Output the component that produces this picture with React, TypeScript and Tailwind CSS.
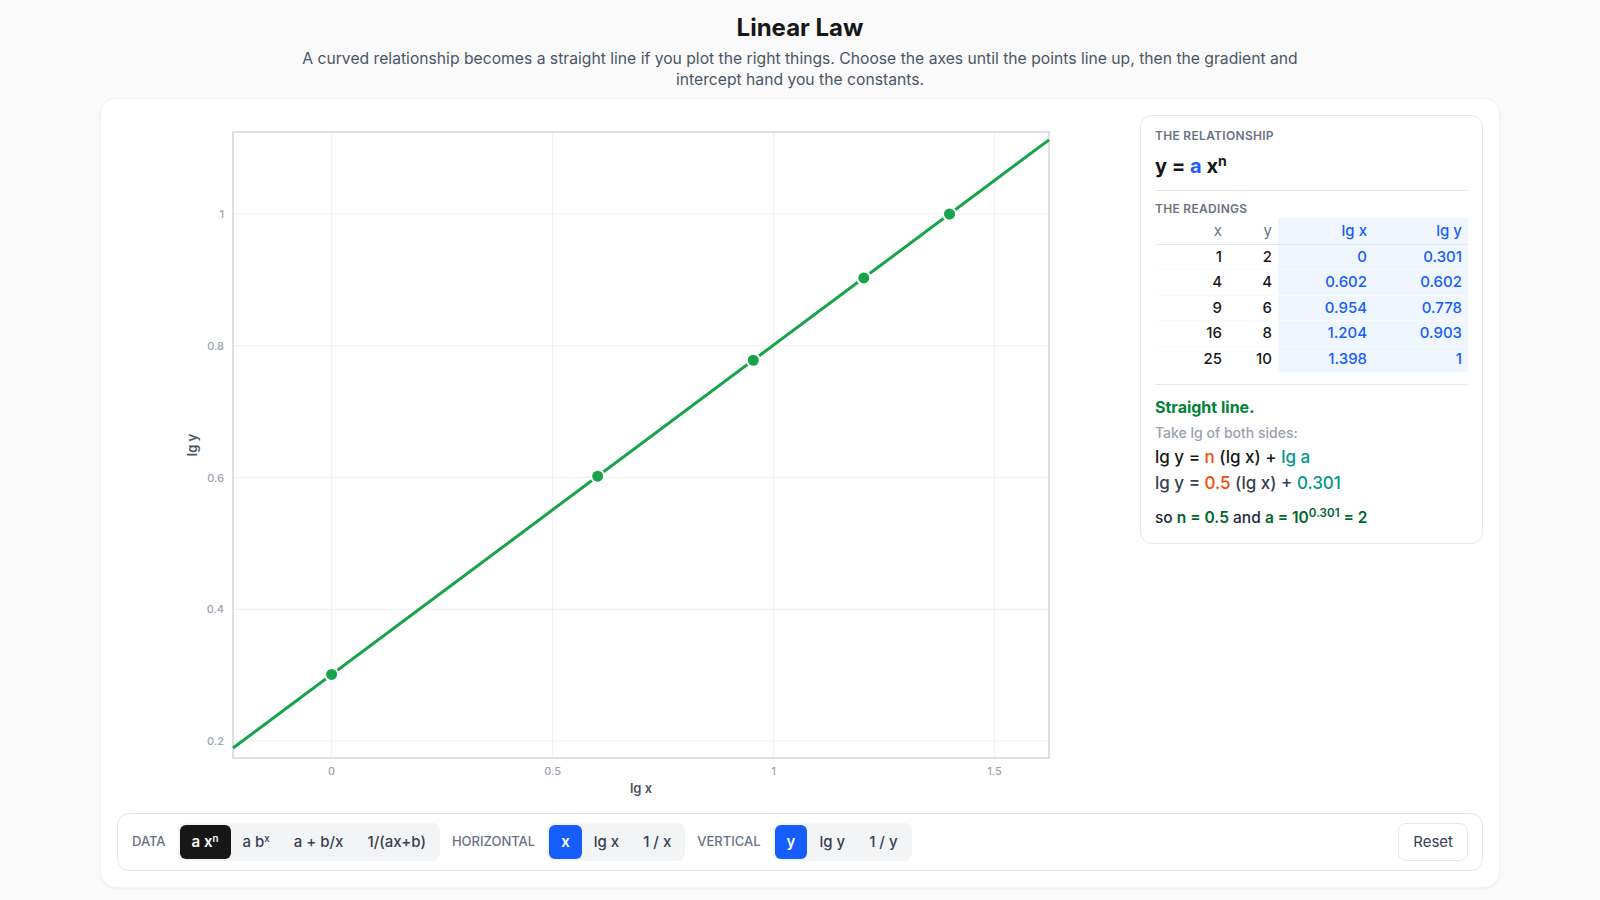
import React, { useState } from "react";

const readings = [
  { x: "1", y: "2", lx: "0", ly: "0.301" },
  { x: "4", y: "4", lx: "0.602", ly: "0.602" },
  { x: "9", y: "6", lx: "0.954", ly: "0.778" },
  { x: "16", y: "8", lx: "1.204", ly: "0.903" },
  { x: "25", y: "10", lx: "1.398", ly: "1" }
];

// plot geometry in svg pixels
const W = 1007;
const H = 682;
const L = 116;
const R = 932;
const T = 17;
const B = 643;
const px = (v: number) => 214.6 + 442 * v;
const py = (v: number) => 99 + (1 - v) * 658.75;
const invx = (p: number) => (p - 214.6) / 442;

function Chart() {
  const xTicks = [0, 0.5, 1, 1.5];
  const yTicks = [0.2, 0.4, 0.6, 0.8, 1];
  const line = (v: number) => 0.5 * v + 0.301;
  const x0 = invx(L);
  const x1 = invx(R);
  return (
    <svg width={W} height={H} viewBox={`0 0 ${W} ${H}`} className="block">
      {xTicks.map(t => (
        <line key={"gx" + t} x1={px(t)} x2={px(t)} y1={T} y2={B} stroke="#f0f1f4" strokeWidth={1} />
      ))}
      {yTicks.map(t => (
        <line key={"gy" + t} x1={L} x2={R} y1={py(t)} y2={py(t)} stroke="#f0f1f4" strokeWidth={1} />
      ))}
      <rect x={L} y={T} width={R - L} height={B - T} fill="none" stroke="#d4d6dc" strokeWidth={1.5} />
      {xTicks.map(t => (
        <text key={"tx" + t} x={px(t)} y={660} textAnchor="middle" fontSize={11} fontWeight={500} fill="#9ca3af">
          {t}
        </text>
      ))}
      {yTicks.map(t => (
        <text key={"ty" + t} x={107} y={py(t) + 4} textAnchor="end" fontSize={11} fontWeight={500} fill="#9ca3af">
          {t}
        </text>
      ))}
      <text x={(L + R) / 2} y={678} textAnchor="middle" fontSize={13} fontWeight={600} fill="#4b5563">
        lg x
      </text>
      <text
        x={80}
        y={(T + B) / 2}
        textAnchor="middle"
        fontSize={13}
        fontWeight={600}
        fill="#4b5563"
        transform={`rotate(-90 80 ${(T + B) / 2})`}
      >
        lg y
      </text>
      <line x1={L} y1={py(line(x0))} x2={R} y2={py(line(x1))} stroke="#16a34a" strokeWidth={3} />
      {readings.map(r => (
        <circle
          key={r.x}
          cx={px(Number(r.lx))}
          cy={py(Number(r.ly))}
          r={6.5}
          fill="#16a34a"
          stroke="#ffffff"
          strokeWidth={2}
        />
      ))}
    </svg>
  );
}

function Segment({
  options,
  value,
  onChange,
  activeClass
}: {
  options: { key: string; label: React.ReactNode }[];
  value: string;
  onChange: (k: string) => void;
  activeClass: string;
}) {
  return (
    <div className="flex h-[38px] items-stretch rounded-lg bg-gray-100 p-0.5">
      {options.map(o => (
        <button
          key={o.key}
          onClick={() => onChange(o.key)}
          className={
            "rounded-md px-3 text-[15px] font-medium " +
            (value === o.key ? activeClass : "text-gray-700")
          }
        >
          {o.label}
        </button>
      ))}
    </div>
  );
}

export default function App() {
  const [data, setData] = useState("axn");
  const [hor, setHor] = useState("x");
  const [ver, setVer] = useState("y");

  return (
    <div className="min-h-screen bg-[#fafafa] pt-3 font-['Inter','Noto_Sans',sans-serif] text-[#171717]">
      <h1 className="text-center text-2xl font-bold leading-8">Linear Law</h1>
      <p className="mx-auto mt-1 text-center text-[15.7px] leading-[21px] text-gray-600">
        A curved relationship becomes a straight line if you plot the right things. Choose the axes until the points line up, then the gradient and
        <br />
        intercept hand you the constants.
      </p>

      <div className="mx-auto mt-2 w-[1400px] rounded-2xl border border-[#f3f3f3] bg-white p-4 shadow-[0_1px_3px_rgba(0,0,0,0.05)]">
        <div className="flex gap-4">
          <div className="flex-1">
            <Chart />
          </div>

          <div className="h-fit w-[343px] rounded-xl border border-gray-200 px-3.5 pb-3.5 pt-3">
            <div className="text-xs font-semibold uppercase leading-4 tracking-wide text-gray-500">The relationship</div>
            <div className="mt-2 text-xl font-bold leading-7">
              y = <span className="text-blue-600">a</span> x<sup className="text-[0.7em]">n</sup>
            </div>
            <div className="mt-2.5 border-t border-gray-200 pt-2.5">
              <div className="text-xs font-semibold uppercase leading-4 tracking-wide text-gray-500">The readings</div>
              <table className="mt-px w-full border-collapse text-[15px]">
                <thead>
                  <tr className="h-[26px] border-b border-gray-200">
                    <th className="w-[73px] pr-1.5 text-right font-normal text-gray-500">x</th>
                    <th className="w-[50px] pr-1.5 text-right font-normal text-gray-500">y</th>
                    <th className="bg-blue-50 pr-1.5 text-right font-medium text-blue-600">lg x</th>
                    <th className="bg-blue-50 pr-1.5 text-right font-medium text-blue-600">lg y</th>
                  </tr>
                </thead>
                <tbody>
                  {readings.map(r => (
                    <tr key={r.x} className="h-[25.5px] border-b border-gray-50 last:border-b-0">
                      <td className="pr-1.5 text-right font-medium">{r.x}</td>
                      <td className="pr-1.5 text-right font-medium">{r.y}</td>
                      <td className="bg-blue-50 pr-1.5 text-right font-medium text-blue-600">{r.lx}</td>
                      <td className="bg-blue-50 pr-1.5 text-right font-medium text-blue-600">{r.ly}</td>
                    </tr>
                  ))}
                </tbody>
              </table>
            </div>
            <div className="mt-3 border-t border-gray-200 pt-2.5">
              <div className="text-base font-bold leading-6 text-green-700">Straight line.</div>
              <div className="mt-1 text-sm font-medium leading-5 text-gray-400">Take lg of both sides:</div>
              <div className="mt-0.5 text-[17px] font-medium leading-6">
                lg y = <span className="text-orange-600">n</span> (lg x) + <span className="text-teal-600">lg a</span>
              </div>
              <div className="mt-0.5 text-[17px] font-medium leading-6 text-gray-700">
                lg y = <span className="text-orange-600">0.5</span> (lg x) + <span className="text-teal-600">0.301</span>
              </div>
              <div className="mt-3 text-[15.5px] font-medium leading-[22px] text-gray-800">
                so <span className="font-semibold text-green-800">n = 0.5</span> and{" "}
                <span className="font-semibold text-green-800">
                  a = 10<sup className="text-[0.75em]">0.301</sup> = 2
                </span>
              </div>
            </div>
          </div>
        </div>

        <div className="mt-4 flex h-[58px] items-center gap-3 rounded-xl border border-gray-200 px-3.5">
          <span className="text-[13px] font-medium uppercase text-gray-500">Data</span>
          <Segment
            value={data}
            onChange={setData}
            activeClass="bg-[#171717] text-white font-semibold"
            options={[
              { key: "axn", label: <>a x<sup className="text-[0.65em]">n</sup></> },
              { key: "abx", label: <>a b<sup className="text-[0.65em]">x</sup></> },
              { key: "abx2", label: "a + b/x" },
              { key: "inv", label: "1/(ax+b)" }
            ]}
          />
          <span className="text-[13px] font-medium uppercase text-gray-500">Horizontal</span>
          <Segment
            value={hor}
            onChange={setHor}
            activeClass="bg-blue-600 text-white font-semibold"
            options={[
              { key: "x", label: "x" },
              { key: "lgx", label: "lg x" },
              { key: "invx", label: "1 / x" }
            ]}
          />
          <span className="text-[13px] font-medium uppercase text-gray-500">Vertical</span>
          <Segment
            value={ver}
            onChange={setVer}
            activeClass="bg-blue-600 text-white font-semibold"
            options={[
              { key: "y", label: "y" },
              { key: "lgy", label: "lg y" },
              { key: "invy", label: "1 / y" }
            ]}
          />
          <button
            className="ml-auto h-[38px] rounded-lg border border-gray-200 bg-white px-3.5 text-[15px] text-gray-700"
            onClick={() => {
              setData("axn");
              setHor("x");
              setVer("y");
            }}
          >
            Reset
          </button>
        </div>
      </div>
    </div>
  );
}
